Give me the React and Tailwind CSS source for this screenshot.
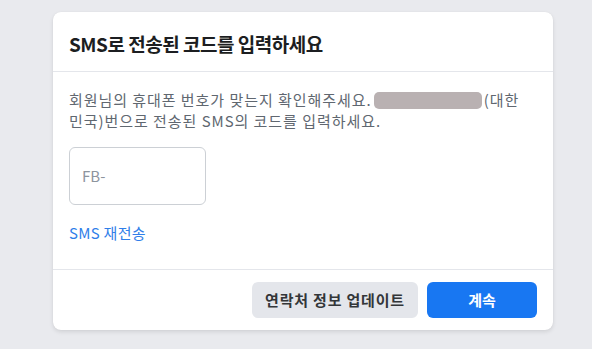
export default function App() {
  const font = { fontFamily: "'Noto Sans CJK KR', 'Noto Sans', sans-serif" };

  return (
    <div className="w-[592px] h-[349px] bg-[#e9eaee] pt-[12px] pl-[53px]" style={font}>
      <div className="w-[500px] h-[318px] bg-white rounded-lg shadow-[0_2px_4px_rgba(0,0,0,0.1),0_0_1px_rgba(0,0,0,0.08)] flex flex-col">
        {/* Header */}
        <div className="h-[60px] px-4 flex items-center border-b border-[#e4e6eb]">
          <h1 className="text-[19px] leading-[24px] font-bold tracking-[-0.5px] text-[#1c1e21] pt-[5px]">
            SMS로 전송된 코드를 입력하세요
          </h1>
        </div>

        {/* Body */}
        <div className="flex-1 px-4 pt-[17px] border-b border-[#e4e6eb]">
          <p className="text-[15px] leading-[21px] tracking-[0.95px] text-[#606770]">
            회원님의 휴대폰 번호가 맞는지 확인해주세요.
            <span className="inline-block align-middle w-[108px] h-[17px] mx-[2px] -mt-[3px] rounded-[5px] bg-[#b9b1b2]" />
            (대한
            <br />
            민국)번으로 전송된 SMS의 코드를 입력하세요.
          </p>

          <div className="mt-[16px] w-[137px] h-[58px] rounded-md border border-[#ccd0d5] flex items-center px-3">
            <span className="text-[15px] text-[#8d949e]">FB-</span>
          </div>

          <a className="inline-block mt-[18px] text-[15px] leading-[20px] tracking-[0.3px] text-[#2f7ee9]">SMS 재전송</a>
        </div>

        {/* Footer */}
        <div className="h-[60px] px-4 flex items-center justify-end gap-[9px]">
          <button className="w-[166px] h-[36px] rounded-md bg-[#e4e6eb] text-[15px] font-semibold tracking-[0.8px] text-[#333639]">
            연락처 정보 업데이트
          </button>
          <button className="w-[110px] h-[36px] rounded-md bg-[#1877f2] text-[15px] font-bold text-white">
            계속
          </button>
        </div>
      </div>
    </div>
  );
}
